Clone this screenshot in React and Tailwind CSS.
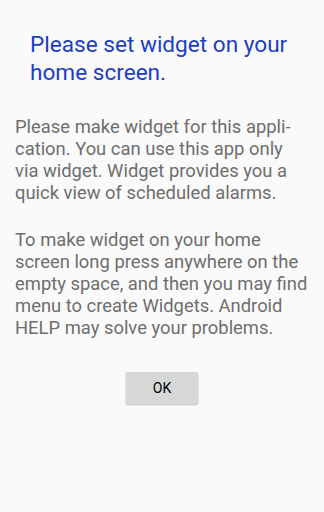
import React from 'react';

const App = () => {
  return (
    <div
      className="w-[324px] h-[512px] bg-[#fafafa] overflow-hidden"
      style={{ fontFamily: 'Roboto, sans-serif' }}
    >
      {/* Title */}
      <h1 className="pt-[31px] pl-[30px] pr-2 text-[22.6px] leading-[28px] text-[#1c3ec2] whitespace-nowrap">
        <span className="block">Please set widget on your</span>
        <span className="block">home screen.</span>
      </h1>

      {/* Body */}
      <div className="mt-[29px] px-[15px] text-[18.4px] leading-[22px] text-[#6e6e6e] whitespace-nowrap">
        <p>
          <span className="block">Please make widget for this appli-</span>
          <span className="block">cation. You can use this app only</span>
          <span className="block">via widget. Widget provides you a</span>
          <span className="block">quick view of scheduled alarms.</span>
        </p>
        <p className="mt-[25px]">
          <span className="block">To make widget on your home</span>
          <span className="block">screen long press anywhere on the</span>
          <span className="block">empty space, and then you may find</span>
          <span className="block">menu to create Widgets. Android</span>
          <span className="block">HELP may solve your problems.</span>
        </p>
      </div>

      {/* OK button */}
      <div className="flex justify-center mt-[33px]">
        <button className="w-[72px] h-[32px] bg-[#d6d7d7] rounded-[2px] shadow-[0_1px_2px_rgba(0,0,0,0.25)] text-[14px] font-normal text-black">
          OK
        </button>
      </div>
    </div>
  );
};

export default App;
